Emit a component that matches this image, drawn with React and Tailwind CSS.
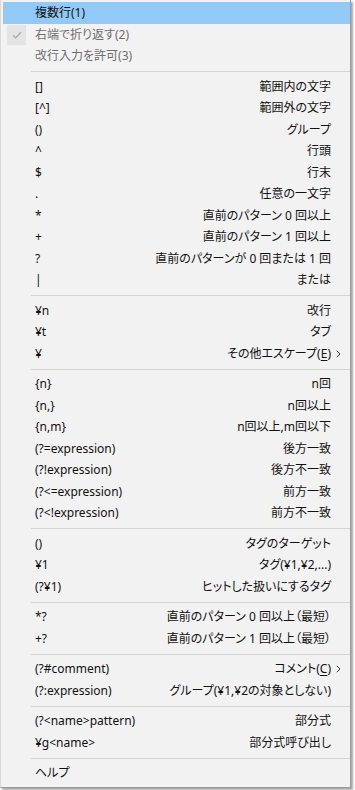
import React from 'react';

const groups = [
    [
        { left: '複数行(1)', active: true },
        { left: '右端で折り返す(2)', disabled: true, checked: true },
        { left: '改行入力を許可(3)', disabled: true },
    ],
    [
        { left: '[]', right: '範囲内の文字' },
        { left: '[^]', right: '範囲外の文字' },
        { left: '()', right: 'グループ' },
        { left: '^', right: '行頭' },
        { left: '$', right: '行末' },
        { left: '.', right: '任意の一文字' },
        { left: '*', right: '直前のパターン 0 回以上' },
        { left: '+', right: '直前のパターン 1 回以上' },
        { left: '?', right: '直前のパターンが 0 回または 1 回' },
        { left: '|', right: 'または' },
    ],
    [
        { left: '¥n', right: '改行' },
        { left: '¥t', right: 'タブ' },
        { left: '¥', right: 'その他エスケープ', key: 'E', sub: true },
    ],
    [
        { left: '{n}', right: 'n回' },
        { left: '{n,}', right: 'n回以上' },
        { left: '{n,m}', right: 'n回以上,m回以下' },
        { left: '(?=expression)', right: '後方一致' },
        { left: '(?!expression)', right: '後方不一致' },
        { left: '(?<=expression)', right: '前方一致' },
        { left: '(?<!expression)', right: '前方不一致' },
    ],
    [
        { left: '()', right: 'タグのターゲット' },
        { left: '¥1', right: 'タグ(¥1,¥2,...)' },
        { left: '(?¥1)', right: 'ヒットした扱いにするタグ' },
    ],
    [
        { left: '*?', right: '直前のパターン 0 回以上（最短）' },
        { left: '+?', right: '直前のパターン 1 回以上（最短）' },
    ],
    [
        { left: '(?#comment)', right: 'コメント', key: 'C', sub: true },
        { left: '(?:expression)', right: 'グループ(¥1,¥2の対象としない)' },
    ],
    [
        { left: '(?<name>pattern)', right: '部分式' },
        { left: '¥g<name>', right: '部分式呼び出し' },
    ],
    [{ left: 'ヘルプ' }],
];

const Check = () => (
    <svg width="10" height="8" viewBox="0 0 10 8" fill="none">
        <path d="M1 4.2 L3.6 6.8 L9 1.2" stroke="#a3a3a3" strokeWidth="1.2" />
    </svg>
);

const Arrow = () => (
    <svg width="5" height="8" viewBox="0 0 5 8" fill="none">
        <path d="M0.8 0.8 L4 4 L0.8 7.2" stroke="#333" strokeWidth="1" />
    </svg>
);

const Item = ({ item }) => (
    <div
        className={`relative flex items-center h-[21.5px] ${item.active ? 'bg-[#91c9f7] h-[22px]' : ''} ${
            item.disabled ? 'text-[#6d6d6d]' : 'text-[#111]'
        }`}
    >
        {item.checked && (
            <div className="absolute left-[4px] top-[1px] w-[19px] h-[20px] bg-[#e4e4e4] flex items-center justify-center">
                <Check />
            </div>
        )}
        <span className="pl-[32px] whitespace-nowrap">{item.left}</span>
        <span className="flex-1" />
        {item.right && (
            <span className="whitespace-nowrap">
                {item.right}
                {item.key && (
                    <>
                        (<span className="underline underline-offset-2">{item.key}</span>)
                    </>
                )}
            </span>
        )}
        <span className="w-[19px] flex-shrink-0 flex items-center pl-[5px]">{item.sub && <Arrow />}</span>
    </div>
);

export default function App() {
    return (
        <div className="w-[355px] h-[790px] bg-white overflow-hidden">
            <div
                className="w-[351px] h-[788px] bg-[#f2f2f2] border-l border-r border-b border-l-[#d9d9d9] border-r-[#9a9a9a] border-b-[#9a9a9a] pl-[2px] pt-[2px] shadow-[2px_2px_2px_rgba(0,0,0,0.35)] text-[12px] [font-feature-settings:'palt']"
                style={{ fontFamily: '"Noto Sans", "Noto Sans CJK JP", sans-serif' }}
            >
                {groups.map((group, gi) => (
                    <div key={gi}>
                        {gi > 0 && (
                            <div className="h-[9px] flex items-center pl-[28px]">
                                <div className="h-px w-full bg-[#d5d5d5]" />
                            </div>
                        )}
                        {group.map((item, ii) => (
                            <Item key={ii} item={item} />
                        ))}
                    </div>
                ))}
            </div>
        </div>
    );
}
